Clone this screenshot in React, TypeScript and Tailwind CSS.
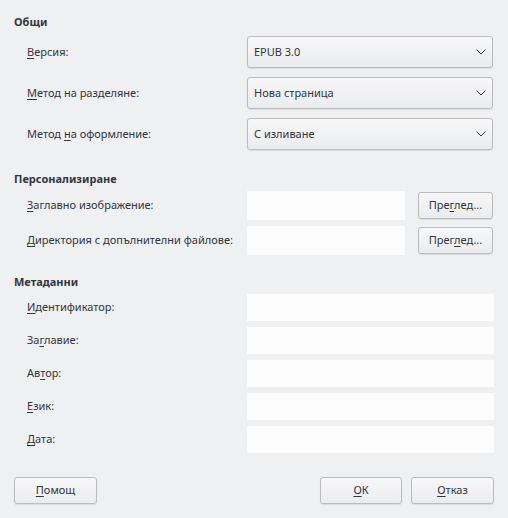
import React from "react";

const font = { fontFamily: '"Noto Sans", "DejaVu Sans", sans-serif' };

// mnemonic letter, Qt style
function Mn({ children }: { children: React.ReactNode }) {
  return <span className="underline decoration-1 underline-offset-[2px]">{children}</span>;
}

function Chevron() {
  return (
    <svg width="10" height="6" viewBox="0 0 10 6" className="shrink-0">
      <path d="M0.5 0.5 L5 5 L9.5 0.5" fill="none" stroke="#31363b" strokeWidth="1" />
    </svg>
  );
}

function Combo({ value }: { value: string }) {
  return (
    <div className="w-[246px] h-[32px] shrink-0 flex items-center justify-between pl-[6px] pr-[6px] rounded-[3px] border border-[#b9bbbd] bg-gradient-to-b from-[#f7f7f8] to-[#ebecee] shadow-[0_1px_1px_rgba(0,0,0,0.08)]">
      <span>{value}</span>
      <Chevron />
    </div>
  );
}

function Btn({ children, w }: { children: React.ReactNode; w: string }) {
  return (
    <div
      className={`${w} h-[27px] shrink-0 flex items-center justify-center rounded-[3px] border border-[#b9bbbd] bg-gradient-to-b from-[#f7f7f8] to-[#ebecee] shadow-[0_1px_1px_rgba(0,0,0,0.08)]`}
    >
      {children}
    </div>
  );
}

function Label({ children }: { children: React.ReactNode }) {
  return <div className="w-[233px] shrink-0 pl-[13px] whitespace-nowrap">{children}</div>;
}

export default function App() {
  return (
    <div
      className="w-[508px] h-[518px] bg-[#eff0f1] text-[#31363b] text-[11px] px-[14px] pt-[14px] flex flex-col"
      style={font}
    >
      {/* Общи */}
      <div className="h-[15px] leading-[15px] font-bold">Общи</div>
      <div className="mt-[7px] flex flex-col gap-[9px]">
        <div className="flex items-center h-[32px]">
          <Label>
            <Mn>В</Mn>ерсия:
          </Label>
          <Combo value="EPUB 3.0" />
        </div>
        <div className="flex items-center h-[32px]">
          <Label>
            <Mn>М</Mn>етод на разделяне:
          </Label>
          <Combo value="Нова страница" />
        </div>
        <div className="flex items-center h-[32px]">
          <Label>
            Метод <Mn>н</Mn>а оформление:
          </Label>
          <Combo value="С изливане" />
        </div>
      </div>

      {/* Персонализиране */}
      <div className="mt-[21px] h-[15px] leading-[15px] font-bold">Персонализиране</div>
      <div className="mt-[5px] flex flex-col gap-[6px]">
        <div className="flex items-center h-[29px]">
          <Label>
            <Mn>З</Mn>аглавно изображение:
          </Label>
          <div className="w-[158px] h-[29px] shrink-0 bg-[#fcfcfc]" />
          <div className="ml-[13px]">
            <Btn w="w-[75px]">
              <span>
                Пре<Mn>г</Mn>лед...
              </span>
            </Btn>
          </div>
        </div>
        <div className="flex items-center h-[29px]">
          <Label>
            <Mn>Д</Mn>иректория с допълнителни файлове:
          </Label>
          <div className="w-[158px] h-[29px] shrink-0 bg-[#fcfcfc]" />
          <div className="ml-[13px]">
            <Btn w="w-[75px]">
              <span>
                Прег<Mn>л</Mn>ед...
              </span>
            </Btn>
          </div>
        </div>
      </div>

      {/* Метаданни */}
      <div className="mt-[19px] h-[15px] leading-[15px] font-bold">Метаданни</div>
      <div className="mt-[5px] flex flex-col gap-[6px]">
        {[
          <>
            <Mn>И</Mn>дентификатор:
          </>,
          <>
            За<Mn>г</Mn>лавие:
          </>,
          <>
            Ав<Mn>т</Mn>ор:
          </>,
          <>
            <Mn>Е</Mn>зик:
          </>,
          <>
            <Mn>Д</Mn>ата:
          </>,
        ].map((l, i) => (
          <div key={i} className="flex items-center h-[27px]">
            <Label>{l}</Label>
            <div className="w-[247px] h-[27px] shrink-0 bg-[#fcfcfc]" />
          </div>
        ))}
      </div>

      {/* бутони */}
      <div className="mt-[24px] flex items-center">
        <Btn w="w-[83px]">
          <span>
            <Mn>П</Mn>омощ
          </span>
        </Btn>
        <div className="flex-1" />
        <div className="flex gap-[9px]">
          <Btn w="w-[82px]">
            <span>
              <Mn>О</Mn>К
            </span>
          </Btn>
          <Btn w="w-[83px]">
            <span>
              <Mn>О</Mn>тказ
            </span>
          </Btn>
        </div>
      </div>
    </div>
  );
}
